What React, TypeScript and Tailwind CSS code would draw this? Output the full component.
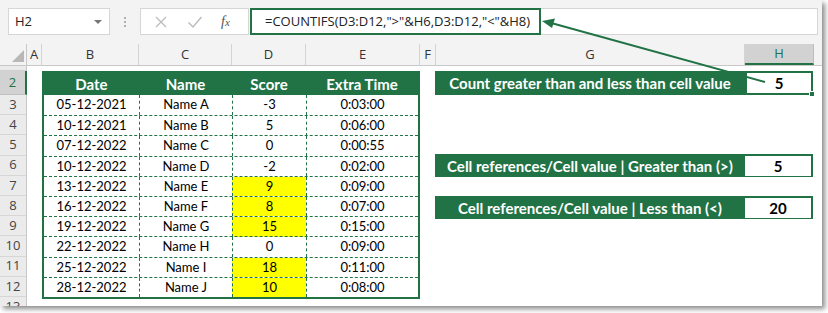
import React from 'react';

const GREEN = '#217346';

type Row = { date: string; name: string; score: string; time: string; hi: boolean };

const ROWS: Row[] = [
  { date: '05-12-2021', name: 'Name A', score: '-3', time: '0:03:00', hi: false },
  { date: '10-12-2021', name: 'Name B', score: '5', time: '0:06:00', hi: false },
  { date: '07-12-2022', name: 'Name C', score: '0', time: '0:00:55', hi: false },
  { date: '10-12-2022', name: 'Name D', score: '-2', time: '0:02:00', hi: false },
  { date: '13-12-2022', name: 'Name E', score: '9', time: '0:09:00', hi: true },
  { date: '16-12-2022', name: 'Name F', score: '8', time: '0:07:00', hi: true },
  { date: '19-12-2022', name: 'Name G', score: '15', time: '0:15:00', hi: true },
  { date: '22-12-2022', name: 'Name H', score: '0', time: '0:09:00', hi: false },
  { date: '25-12-2022', name: 'Name I', score: '18', time: '0:11:00', hi: true },
  { date: '28-12-2022', name: 'Name J', score: '10', time: '0:08:00', hi: true },
];

// column header letters with pixel widths
const COLS: { label: string; w: string; sel?: boolean }[] = [
  { label: 'A', w: 'w-[15px]' },
  { label: 'B', w: 'w-[97px]' },
  { label: 'C', w: 'w-[93px]' },
  { label: 'D', w: 'w-[74px]' },
  { label: 'E', w: 'w-[114px]' },
  { label: 'F', w: 'w-[16px]' },
  { label: 'G', w: 'w-[309px]' },
  { label: 'H', w: 'w-[69px]', sel: true },
];

const cellFont = { fontFamily: 'Lato, "Liberation Sans", sans-serif' };
const uiFont = { fontFamily: '"Open Sans", "Noto Sans", sans-serif' };

function Toolbar() {
  return (
    <div className="h-[44px] shrink-0 bg-[#f3f3f3] flex items-start pt-[8px] pl-[8px]" style={uiFont}>
      <div className="w-[102px] h-[27px] bg-white border border-[#d6d6d6] flex items-center justify-between pl-[6px] pr-[7px]">
        <span className="text-[13px] text-[#222]">H2</span>
        <span className="w-0 h-0 border-l-[4px] border-r-[4px] border-t-[4px] border-l-transparent border-r-transparent border-t-[#777]" />
      </div>
      <div className="w-[30px] flex flex-col items-center justify-center gap-[2px] h-[27px]">
        <span className="w-[2px] h-[2px] bg-[#b0b0b0]" />
        <span className="w-[2px] h-[2px] bg-[#b0b0b0]" />
        <span className="w-[2px] h-[2px] bg-[#b0b0b0]" />
      </div>
      <div className="w-[109px] h-[27px] bg-white border border-[#d6d6d6] flex items-center">
        <svg width="14" height="14" viewBox="0 0 14 14" className="ml-[13px]">
          <path d="M2 2 L12 12 M12 2 L2 12" stroke="#bdbdbd" strokeWidth="1.4" />
        </svg>
        <svg width="16" height="14" viewBox="0 0 16 14" className="ml-[19px]">
          <path d="M1.5 7.5 L6 12 L14.5 2" stroke="#bdbdbd" strokeWidth="1.5" fill="none" />
        </svg>
        <span className="ml-[18px] text-[14px] italic text-[#555]" style={{ fontFamily: '"Liberation Serif", serif' }}>
          f<span className="text-[11px]">x</span>
        </span>
      </div>
      <div className="flex-1 h-[27px] bg-white border-t border-b border-r border-[#d6d6d6] mr-[4px] ml-[2px] flex">
        <div className="w-[291px] h-[27px] -mt-px -ml-px border-2 border-[#217346] flex items-center pl-[13px]">
          <span className="text-[13px] text-[#222] whitespace-nowrap">=COUNTIFS(D3:D12,"&gt;"&amp;H6,D3:D12,"&lt;"&amp;H8)</span>
        </div>
      </div>
    </div>
  );
}

function ColumnHeaders() {
  return (
    <div className="h-[22px] shrink-0 bg-[#f3f3f3] flex border-b border-[#c8c8c8]" style={uiFont}>
      <div className="w-[27px] h-full border-r border-[#c8c8c8] flex items-end justify-end pr-[2px] pb-[3px]">
        <svg width="12" height="12" viewBox="0 0 12 12">
          <polygon points="12,0 12,12 0,12" fill="#b8b8b8" />
        </svg>
      </div>
      {COLS.map(c => (
        <div
          key={c.label}
          className={`${c.w} h-full flex items-center justify-center text-[13px] border-r ${c.sel ? 'bg-[#d2d2d2] text-[#217346] border-b-2 border-b-[#217346] border-r-[#bdbdbd]' : 'text-[#333] border-[#d4d4d4]'}`}
        >
          {c.label}
        </div>
      ))}
      <div className="flex-1" />
    </div>
  );
}

function RowHeaders() {
  const nums = ['3', '4', '5', '6', '7', '8', '9', '10', '11', '12'];
  return (
    <div className="w-[27px] shrink-0 flex flex-col bg-[#ebebeb] border-r border-[#c8c8c8] text-[13px] text-[#444]" style={uiFont}>
      <div className="h-[5px] shrink-0 border-b border-[#d0d0d0]" />
      <div className="h-[24px] shrink-0 bg-[#d2d2d2] text-[#217346] border-r-2 border-[#217346] -mr-px flex items-center justify-center border-b border-b-[#c0c0c0]">2</div>
      {nums.map(n => (
        <div key={n} className="h-[20.2px] shrink-0 flex items-center justify-center border-b border-[#d6d6d6]">{n}</div>
      ))}
      <div className="h-[20px] shrink-0 flex items-center justify-center">13</div>
    </div>
  );
}

function DataTable() {
  return (
    <div className="w-[378px] shrink-0 border-2 border-[#217346] flex flex-col text-black" style={cellFont}>
      <div className="h-[22px] shrink-0 bg-[#217346] grid grid-cols-[95px_93px_74px_112px] text-white font-bold text-[15px]">
        {['Date', 'Name', 'Score', 'Extra Time'].map(h => (
          <div key={h} className="flex items-center justify-center">{h}</div>
        ))}
      </div>
      {ROWS.map((r, i) => (
        <div
          key={r.date + r.name}
          className={`h-[20.2px] shrink-0 grid grid-cols-[95px_93px_74px_112px] text-[13px] ${i > 0 ? 'border-t border-dashed border-[#217346]' : ''}`}
        >
          <div className="flex items-center justify-center">{r.date}</div>
          <div className="flex items-center justify-center border-l border-dashed border-[#217346]">{r.name}</div>
          <div className={`flex items-center justify-center border-l border-dashed border-[#217346] ${r.hi ? 'bg-[#ffff00]' : ''}`}>{r.score}</div>
          <div className="flex items-center justify-center border-l border-dashed border-[#217346]">{r.time}</div>
        </div>
      ))}
    </div>
  );
}

function InfoBox({ label, value, className }: { label: string; value: string; className?: string }) {
  return (
    <div className={`h-[23px] shrink-0 bg-[#217346] flex pt-[2px] pr-[2px] pb-px ${className ?? ''}`}>
      <div className="w-[310px] flex items-center justify-center text-white font-bold text-[15px] whitespace-nowrap">{label}</div>
      <div className="flex-1 bg-white flex items-center justify-center font-bold text-[15px] text-black">{value}</div>
    </div>
  );
}

function SidePanel() {
  return (
    <div className="w-[378px] shrink-0 flex flex-col" style={cellFont}>
      <div className="h-[24px] shrink-0 flex">
        <div className="w-[310px] bg-[#217346] flex items-center justify-center text-white font-bold text-[15px] whitespace-nowrap">
          Count greater than and less than cell value
        </div>
        <div className="flex-1 relative border-2 border-[#217346] bg-white flex items-center justify-center font-bold text-[15px] text-black">
          5
          <span className="absolute -right-[4px] -bottom-[4px] w-[6px] h-[6px] bg-[#217346] border border-white" />
        </div>
      </div>
      <InfoBox className="mt-[59px]" label="Cell references/Cell value | Greater than (>)" value="5" />
      <InfoBox className="mt-[19px]" label="Cell references/Cell value | Less than (<)" value="20" />
    </div>
  );
}

export default function App() {
  return (
    <div className="w-[828px] h-[313px] bg-white">
      <div className="w-[822px] h-[306px] bg-white overflow-hidden flex flex-col relative shadow-[3px_3px_5px_rgba(0,0,0,0.45)]">
        <Toolbar />
        <ColumnHeaders />
        <div className="flex flex-1 min-h-0">
          <RowHeaders />
          <div className="flex-1 pt-[5px] pl-[15px] flex items-start gap-[15px]">
            <DataTable />
            <SidePanel />
          </div>
        </div>
        <svg className="absolute left-0 top-0 pointer-events-none" width="822" height="306">
          <line x1="765" y1="82" x2="553" y2="23.5" stroke={GREEN} strokeWidth="2" />
          <polygon points="542,21 555,18.5 552,28" fill={GREEN} />
        </svg>
      </div>
    </div>
  );
}
